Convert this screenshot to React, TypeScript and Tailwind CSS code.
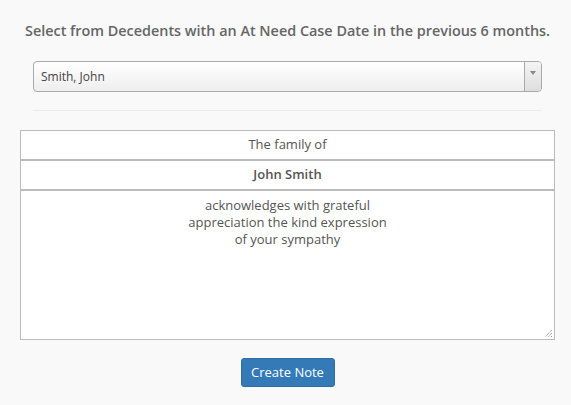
import React from "react";

export default function App() {
  return (
    <div
      className="w-[571px] h-[405px] bg-[#f9f9f9] text-[#555]"
      style={{ fontFamily: '"Open Sans", "Liberation Sans", sans-serif' }}
    >
      <div className="pt-[21px] pl-[20px] w-[555px]">
        <h2 className="text-center text-[14.4px] font-semibold leading-[20px] text-[#666]">
          Select from Decedents with an At Need Case Date in the previous 6 months.
        </h2>
        <div className="mx-[13px] mt-[20px]">
          <div className="flex h-[31px] rounded-[4px] border border-[#aaa] bg-gradient-to-b from-white to-[#eeeeee] overflow-hidden">
            <div className="flex-1 flex items-center pl-[7px] text-[12px] text-[#444]">Smith, John</div>
            <div className="w-[17px] border-l border-[#aaa] bg-gradient-to-b from-[#f4f4f4] to-[#dedede] flex justify-center pt-[9px]">
              <svg width="6" height="4" viewBox="0 0 6 4">
                <path d="M0 0 L6 0 L3 4 Z" fill="#888" />
              </svg>
            </div>
          </div>
          <div className="mt-[18px] border-t border-[#eaeaea]" />
        </div>
        <div className="mt-[19px]">
          <div className="h-[30px] border border-[#bbb] bg-white flex items-center justify-center text-[13px] text-[#555]">
            The family of
          </div>
          <div className="h-[30px] border border-[#bbb] bg-white flex items-center justify-center text-[13px] font-semibold text-[#555]">
            John Smith
          </div>
          <div className="relative h-[150px] border border-[#bbb] bg-white text-center text-[13px] leading-[17px] text-[#555] pt-[6px]">
            acknowledges with grateful
            <br />
            appreciation the kind expression
            <br />
            of your sympathy
            <svg className="absolute right-[1px] bottom-[1px]" width="9" height="9" viewBox="0 0 9 9">
              <path d="M8 1 L1 8 M8 4 L4 8 M8 7 L7 8" stroke="#777" strokeWidth="1" strokeDasharray="1 1" />
            </svg>
          </div>
        </div>
        <div className="flex justify-center mt-[18px]">
          <button className="w-[94px] h-[29px] rounded-[3px] bg-[#337ab7] border border-[#2e6da4] text-white text-[13px] leading-none">
            Create Note
          </button>
        </div>
      </div>
    </div>
  );
}
